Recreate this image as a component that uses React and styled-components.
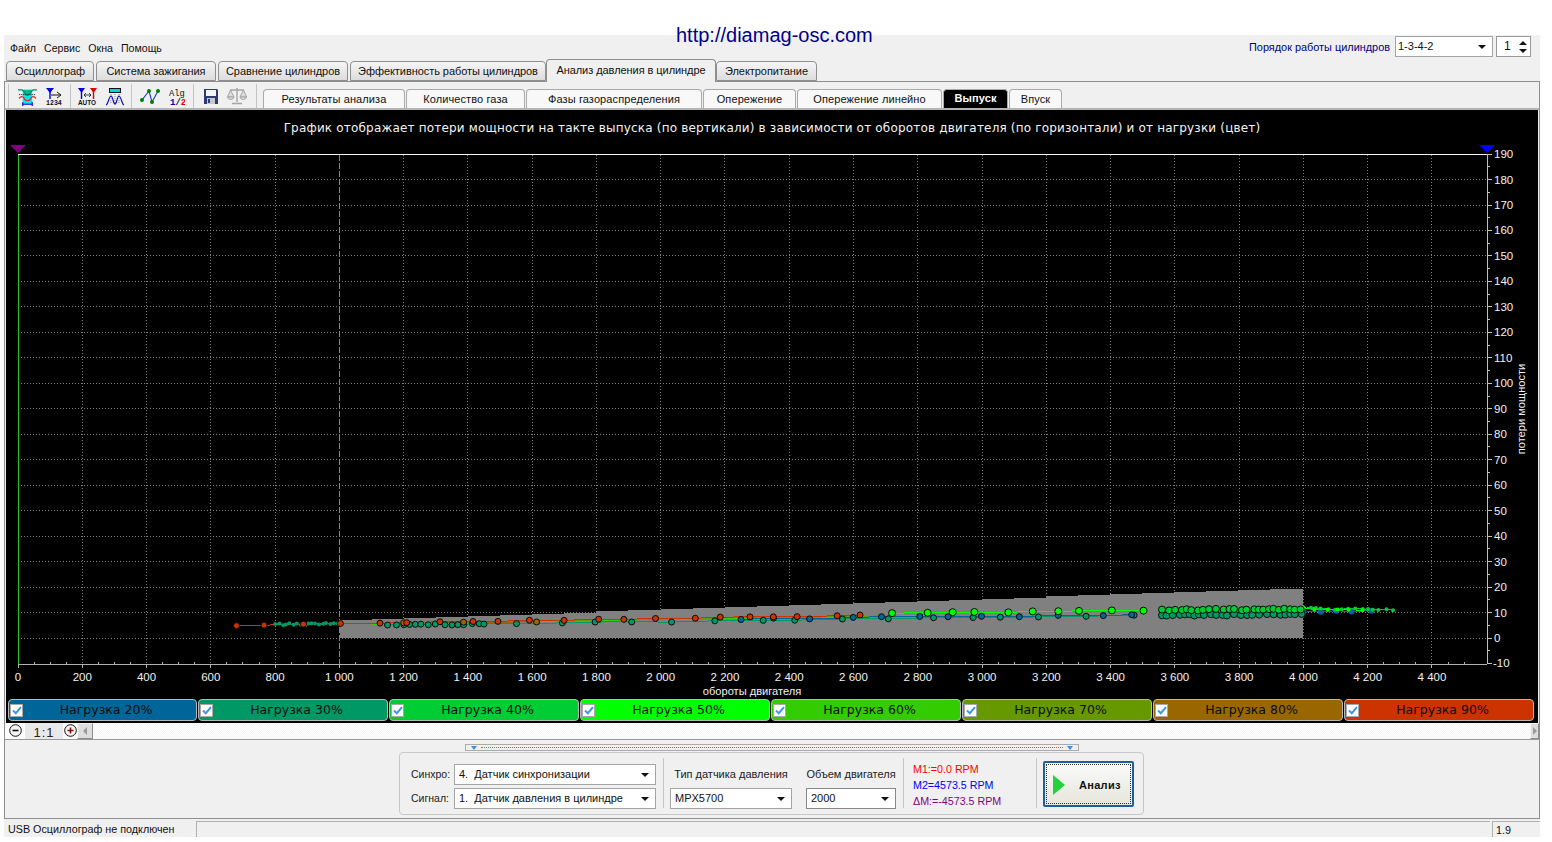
import React from 'react';
import styled, { createGlobalStyle } from 'styled-components';

const GlobalStyle = createGlobalStyle`
  html, body { margin: 0; padding: 0; background: #fff; }
  body { font-family: "Liberation Sans", Arial, sans-serif; font-size: 11px; color: #111; }
  * { box-sizing: border-box; }
`;

const Screen = styled.div`
  position: relative;
  width: 1552px;
  height: 842px;
  padding: 35px 12px 5px 4px;
  overflow: hidden;
`;

const SiteUrl = styled.div`
  position: absolute;
  left: 676px;
  top: 23px;
  font-size: 20px;
  line-height: 24px;
  color: #00008b;
`;

const Window = styled.div`
  height: 802px;
  background: #f0f0f0;
  display: flex;
  flex-direction: column;
`;

const TopRow = styled.div`
  height: 25px;
  display: flex;
  align-items: flex-start;
  justify-content: space-between;
  padding: 0 9px 0 6px;
`;

const Menu = styled.div`
  display: flex;
  gap: 8px;
  padding-top: 7px;
  line-height: 13px;
  font-size: 10.6px;
`;

const CylinderOrder = styled.div`
  display: flex;
  align-items: flex-start;
  padding-top: 1px;
`;

const OrderLabel = styled.span`
  color: #000080;
  font-size: 10.9px;
  line-height: 21px;
  margin-right: 5px;
  padding-top: 1px;
`;

const Spinner = styled.div`
  width: 35px;
  height: 21px;
  margin-left: 3px;
  border: 1px solid #999;
  background: #fff;
  padding-left: 7px;
  line-height: 19px;
  font-size: 12px;
  display: flex;
  justify-content: space-between;
`;

const SpinArrows = styled.div`
  width: 14px;
  display: flex;
  flex-direction: column;
  align-items: center;
  justify-content: center;
  gap: 4px;
`;

const SpinArrow = styled.i`
  width: 0;
  height: 0;
  border-left: 4px solid transparent;
  border-right: 4px solid transparent;
  ${p => (p.$up ? 'border-bottom: 4px solid #111;' : 'border-top: 4px solid #111;')}
`;

const MainTabs = styled.div`
  height: 21px;
  display: flex;
  gap: 2px;
  align-items: flex-end;
  padding-left: 2px;
`;

const MainTab = styled.div`
  width: ${p => p.$w}px;
  height: ${p => (p.$active ? 23 : 20)}px;
  margin: ${p => (p.$active ? '0 -2px -1px -2px' : '0')};
  position: relative;
  z-index: ${p => (p.$active ? 2 : 1)};
  border: 1px solid #8e8e8e;
  border-bottom: ${p => (p.$active ? 'none' : '1px solid #8e8e8e')};
  border-radius: 4px 4px 0 0;
  background: ${p => (p.$active ? '#f0f0f0' : 'linear-gradient(#f6f6f6, #dcdcdc)')};
  text-align: center;
  font-size: 11px;
  letter-spacing: -0.06px;
  line-height: ${p => (p.$active ? 20 : 19)}px;
  white-space: nowrap;
`;

const Page = styled.div`
  height: 738px;
  border: 1px solid #8e8e8e;
  border-bottom: 1px solid #8e8e8e;
  display: flex;
  flex-direction: column;
`;

const Toolbar = styled.div`
  height: 28px;
  flex: none;
  display: flex;
  align-items: flex-end;
  padding-left: 3px;
  border-bottom: 2px solid #b4b4b4;
  background: #f0f0f0;
`;

const ToolGroup = styled.div`
  width: ${p => p.$w}px;
  height: 24px;
  align-self: flex-start;
  margin-top: 2px;
  display: flex;
  align-items: center;
  justify-content: center;
  gap: 9px;
  border-left: ${p => (p.$first ? '1px solid #c4c4c4' : 'none')};
  border-right: 1px solid #c4c4c4;
`;

const SubTabs = styled.div`
  display: flex;
  gap: 1px;
  margin-left: 6px;
`;

const SubTab = styled.div`
  width: ${p => p.$w}px;
  height: 19px;
  border: 1px solid #aaa;
  border-bottom: none;
  border-radius: 4px 4px 0 0;
  background: ${p => (p.$active ? '#000' : '#f8f8f8')};
  color: ${p => (p.$active ? '#fff' : '#111')};
  font-weight: ${p => (p.$active ? 700 : 400)};
  text-align: center;
  font-size: 11px;
  letter-spacing: 0.1px;
  line-height: ${p => (p.$active ? 16 : 19)}px;
`;

const ChartBox = styled.div`
  flex: none;
  margin: 0 1px;
  height: 613px;
  background: #000;
  display: flex;
  flex-direction: column;
`;

const ChartTitle = styled.div`
  height: 35px;
  padding-top: 10px;
  text-align: center;
  color: #f4f4f4;
  font-family: "DejaVu Sans", Verdana, sans-serif;
  font-size: 12px;
  line-height: 17px;
  letter-spacing: 0.18px;
`;

const Plot = styled.svg`
  display: block;
  flex: none;
`;

const AxisText = styled.text`
  font-family: "Liberation Sans", Arial, sans-serif;
  font-size: 11.5px;
  fill: #f2f2f2;
`;

const AxisName = styled.text`
  font-family: "Liberation Sans", Arial, sans-serif;
  font-size: 11.1px;
  fill: #f2f2f2;
`;

const Legend = styled.div`
  display: grid;
  grid-template-columns: 189px repeat(7, 190px);
  gap: 1px;
  height: 24px;
  padding: 0 0 2px 2px;
`;

const LegendItem = styled.div`
  position: relative;
  height: 22px;
  border: 1px solid #b8b8b8;
  border-radius: 4px;
  background: ${p => p.$color};
  text-align: center;
  font-family: "DejaVu Sans", Verdana, sans-serif;
  font-size: 12.5px;
  line-height: 20px;
  color: #0c0c0c;
  padding-left: 7px;
`;

const LegendCheck = styled.span`
  position: absolute;
  left: 1px;
  top: 4px;
  width: 13px;
  height: 13px;
  background: #fff;
  border: 1px solid #a8a8a8;
  display: flex;
  align-items: center;
  justify-content: center;
`;

const ZoomRow = styled.div`
  flex: none;
  height: 17px;
  display: flex;
  align-items: stretch;
  background: #fbfbfb;
  border-bottom: 1px solid #999;
  padding-left: 3px;
`;

const RoundBtn = styled.div`
  width: 13px;
  height: 13px;
  margin: 1px 0 0 1px;
  display: flex;
`;

const ZoomValue = styled.div`
  width: 39px;
  margin-left: 2px;
  background: #e9e9e9;
  text-align: center;
  font-size: 13px;
  letter-spacing: 1px;
  line-height: 20px;
  color: #222;
  border-left: 1px solid #fff;
  height: 16px;
  overflow: hidden;
`;

const ScrollBtn = styled.div`
  width: ${p => p.$w}px;
  background: #dedede;
  border: 1px solid #f4f4f4;
  border-right-color: #8c8c8c;
  border-bottom-color: #8c8c8c;
  display: flex;
  align-items: center;
  justify-content: center;
`;

const ScrollTrack = styled.div`
  flex: 1;
  background: repeating-conic-gradient(#f4f4f4 0 25%, #fff 0 50%) 0 0 / 2px 2px;
`;

const ScrollArrow = styled.i`
  width: 0;
  height: 0;
  border-top: 4px solid transparent;
  border-bottom: 4px solid transparent;
  ${p => (p.$right ? 'border-left: 4px solid #9a9a9a;' : 'border-right: 4px solid #9a9a9a;')}
`;

const Panel = styled.div`
  flex: 1;
  display: flex;
  flex-direction: column;
  align-items: center;
  padding-top: 4px;
`;

const Splitter = styled.div`
  width: 614px;
  height: 7px;
  border: 1px solid #aaa;
  display: flex;
  align-items: center;
  gap: 4px;
  padding: 0 5px;
`;

const SplitDots = styled.div`
  flex: 1;
  border-top: 1px dotted #3c8fe0;
`;

const SplitTriangle = styled.i`
  width: 0;
  height: 0;
  border-left: 3px solid transparent;
  border-right: 3px solid transparent;
  border-top: 4px solid #3c8fe0;
`;

const ControlGroup = styled.div`
  width: 745px;
  height: 63px;
  margin: 1px 1px 0 0;
  border: 1px solid #c8c8c8;
  border-radius: 4px;
  display: flex;
`;

const GroupDivider = styled.div`
  width: 1px;
  background: #c8c8c8;
  margin: 5px 0 6px;
`;

const SourceFields = styled.div`
  width: 263px;
  padding: 11px 0 0 11px;
  display: grid;
  grid-template-columns: 43px 202px;
  grid-auto-rows: 21px;
  row-gap: 3px;
`;

const SensorFields = styled.div`
  width: 239px;
  padding: 11px 0 0 6px;
  display: grid;
  grid-template-columns: 122px 90px;
  grid-auto-rows: 21px;
  column-gap: 14px;
  row-gap: 3px;
`;

const FieldLabel = styled.div`
  font-size: ${p => (p.$center ? 11 : 10.5)}px;
  line-height: 21px;
  white-space: nowrap;
  color: #222;
  text-align: ${p => (p.$center ? 'center' : 'left')};
`;

const Combo = styled.div`
  height: 21px;
  width: ${p => (p.$w ? `${p.$w}px` : 'auto')};
  border: 1px solid ${p => (p.$dark ? '#888' : '#a4a4a4')};
  background: #fff;
  display: flex;
  align-items: center;
  justify-content: space-between;
  padding: 0 6px 0 ${p => (p.$w ? 2 : 4)}px;
  font-size: 11px;
  line-height: 19px;
  color: #111;
  white-space: pre;
`;

const ComboArrow = styled.i`
  width: 0;
  height: 0;
  flex: none;
  border-left: 4px solid transparent;
  border-right: 4px solid transparent;
  border-top: 4px solid #111;
`;

const Markers = styled.div`
  width: 132px;
  padding: 8px 0 0 9px;
`;

const MarkerLine = styled.div`
  color: ${p => p.$color};
  font-size: 10.7px;
  line-height: 16px;
  white-space: nowrap;
`;

const AnalyzeBtn = styled.div`
  width: 91px;
  height: 46px;
  margin: 8px 0 0 6px;
  border: 2px solid #1e5f9e;
  border-radius: 2px;
  outline: 1px dotted #333;
  outline-offset: -4px;
  background: linear-gradient(#fafafa, #e6e6dc);
  display: flex;
  align-items: center;
  padding: 1px 0 0 8px;
  gap: 14px;
  font-weight: 700;
  font-size: 11px;
  letter-spacing: 0.3px;
`;

const PlayMark = styled.i`
  width: 0;
  height: 0;
  border-top: 10px solid transparent;
  border-bottom: 10px solid transparent;
  border-left: 12px solid #1fd43a;
`;

const StatusBar = styled.div`
  height: 18px;
  padding-top: 2px;
  display: flex;
  font-size: 10.75px;
  line-height: 17px;
`;

const StatusCell = styled.div`
  width: ${p => (p.$w ? `${p.$w}px` : 'auto')};
  flex: ${p => (p.$w ? 'none' : 1)};
  margin-left: ${p => p.$gap || 0}px;
  padding-left: ${p => p.$pad || 0}px;
  border-top: ${p => (p.$plain ? 'none' : '1px solid #b0b0b0')};
  border-left: ${p => (p.$plain ? 'none' : '1px solid #b0b0b0')};
`;

/* chart scale: x in rpm, y in power-loss units, page coordinates */
const toX = rpm => 18 + rpm * 0.32135;
const toY = v => 638 - v * 2.547;
const crisp = n => Math.floor(n) + 0.5;

const random = (seed => () => {
  seed = (seed * 16807) % 2147483647;
  return seed / 2147483647;
})(4711);

function makeSeries(from, to, step, level, slope, spread) {
  const pts = [];
  for (let rpm = from; rpm <= to; rpm += step * (0.7 + random() * 0.6)) {
    pts.push([rpm, level + slope * (rpm - from) / 1000 + (random() - 0.5) * spread]);
  }
  return pts;
}

const SERIES = [
  { color: '#33cc00', lineOnly: true, points: makeSeries(1100, 2900, 150, 5.4, 1.9, 0.5) },
  { color: '#669900', lineOnly: true, points: makeSeries(1000, 2700, 160, 5.6, 1.8, 0.4) },
  { color: '#009966', r: 2, plain: true, points: makeSeries(800, 1000, 11, 5.3, 1, 0.9) },
  { color: '#009966', r: 3, points: makeSeries(1150, 1450, 24, 5.2, 1, 0.6) },
  { color: '#009966', r: 3, points: makeSeries(1450, 3500, 118, 5.4, 1.8, 0.5) },
  { color: '#006699', r: 3, points: makeSeries(2250, 3620, 120, 7.5, 1.3, 0.6) },
  { color: '#006699', r: 3, plain: true, points: makeSeries(4000, 4270, 62, 10.4, 1.5, 0.5) },
  { color: '#00cc33', r: 2, plain: true, points: makeSeries(4000, 4280, 20, 11.6, -2, 0.7) },
  { color: '#00ff00', r: 2, plain: true, points: makeSeries(4000, 4200, 34, 11.6, -2, 0.8) },
  { color: '#996600', r: 3, points: makeSeries(1200, 1700, 240, 5.9, 1, 0.3) },
  { color: '#cc3300', r: 3, points: makeSeries(680, 2650, 100, 5.0, 2.0, 0.4) },
  { color: '#00ff00', r: 3.5, points: makeSeries(2720, 3560, 90, 9.7, 1.4, 0.5) },
  { color: '#009966', r: 3.5, points: makeSeries(3560, 4000, 19, 9.0, 0.5, 0.6) },
  { color: '#00cc33', r: 3.5, points: makeSeries(3560, 4000, 19, 11.0, 0.8, 0.6) }
];

const lossPolygon = () => {
  let d = `M339.5 638`;
  for (let x = 339.5, i = 0; x < 1303; x += 32.1, i++) {
    const top = Math.round(620 - i * 1.07);
    d += ` V${top} H${Math.min(x + 32.1, 1303)}`;
  }
  return `${d} V638 Z`;
};

const xTicks = Array.from({ length: 23 }, (_, i) => i * 200);
const xMinor = Array.from({ length: 91 }, (_, i) => i * 50);
const yTicks = Array.from({ length: 21 }, (_, i) => 190 - i * 10);

const fmtRpm = n => (n >= 1000 ? `${Math.floor(n / 1000)} ${String(n % 1000).padStart(3, '0')}` : String(n));

function Chart() {
  return (
    <Plot width="1532" height="554" viewBox="6 145 1532 554">
      <path d={lossPolygon()} fill="#808080" shapeRendering="crispEdges" />

      {xTicks.filter(t => t > 0 && t <= 4400 && t !== 1000).map(t => (
        <line key={t} x1={crisp(toX(t))} x2={crisp(toX(t))} y1="155" y2="664" stroke="#808080" strokeDasharray="1 2" />
      ))}
      {yTicks.slice(1, 20).map(t => (
        <line key={t} x1="18" x2="1487" y1={crisp(toY(t))} y2={crisp(toY(t))} stroke="#808080" strokeDasharray="1 2" />
      ))}
      <line x1="339.5" x2="339.5" y1="155" y2="664" stroke="#888" strokeDasharray="6 2" />

      <line x1="18" x2="1487" y1="154.5" y2="154.5" stroke="#f4f4f4" />
      <line x1="18" x2="1487" y1="664.5" y2="664.5" stroke="#b0b0b0" />
      <line x1="18.5" x2="18.5" y1="155" y2="664" stroke="#22c322" />
      <line x1="1487.5" x2="1487.5" y1="154" y2="664" stroke="#c8c88a" />

      {xMinor.filter(t => toX(t) <= 1487).map(t => (
        t % 200 === 0
          ? <line key={t} x1={crisp(toX(t))} x2={crisp(toX(t))} y1="664" y2="668" stroke="#b0b0b0" />
          : <line key={t} x1={crisp(toX(t))} x2={crisp(toX(t))} y1="662" y2="664" stroke="#b0b0b0" />
      ))}
      {yTicks.map(t => (
        <g key={t}>
          <line x1="1487" x2="1492" y1={crisp(toY(t))} y2={crisp(toY(t))} stroke="#c8c88a" />
          {t > -10 && <line x1="1487" x2="1490" y1={crisp(toY(t - 5))} y2={crisp(toY(t - 5))} stroke="#c8c88a" />}
        </g>
      ))}

      {SERIES.map((s, i) => (
        <polyline
          key={i}
          fill="none"
          stroke={s.color}
          points={s.points.map(([x, y]) => `${toX(x)},${toY(y)}`).join(' ')}
          shapeRendering="crispEdges"
        />
      ))}
      {SERIES.filter(s => !s.lineOnly).map((s, i) => (
        <g key={i} fill={s.color} stroke={s.plain ? 'none' : '#0a0a0a'}>
          {s.points.map(([x, y], j) => (
            <circle key={j} cx={toX(x)} cy={toY(y)} r={s.r} />
          ))}
        </g>
      ))}

      <polygon points="10,145 26,145 18,153" fill="#800080" />
      <polygon points="1479,145 1495,145 1487,153" fill="#0000ff" />

      {xTicks.map(t => (
        <AxisText key={t} x={toX(t)} y="681" textAnchor="middle">{fmtRpm(t)}</AxisText>
      ))}
      {yTicks.map(t => (
        <AxisText key={t} x={t < 0 ? 1493 : 1494} y={toY(t) + 4}>{t}</AxisText>
      ))}
      <AxisName x="752" y="695" textAnchor="middle">обороты двигателя</AxisName>
      <AxisName transform="translate(1525 409) rotate(-90)" textAnchor="middle">потери мощности</AxisName>
    </Plot>
  );
}

const IconWaves = () => (
  <svg width="19" height="19" viewBox="0 0 20 20">
    <path d="M5 3H15V17H5Z" fill="#00e8e8" />
    <path d="M0 3H4C6 3 7 9 10 9C13 9 14 3 16 3H20" fill="#00b890" stroke="#008a5a" strokeWidth="1.2" />
    <path d="M1 8H19" stroke="#111" strokeDasharray="1 1" />
    <path d="M1 12C4 9 6 10 7 13C8 15 12 15 13 13C14 10 16 9 19 12" fill="none" stroke="#e02020" strokeWidth="1.2" />
    <path d="M5 16V20M15 16V20M5 18H15" stroke="#0000d0" strokeWidth="1.2" />
  </svg>
);

const IconTicks = () => (
  <svg width="16" height="19" viewBox="0 0 16 19">
    <polygon points="0,1 8,1 4,6" fill="#0000e0" />
    <path d="M4 3V12" stroke="#0000e0" strokeWidth="1.4" />
    <path d="M5 8H14M11 5L15 8L11 11" fill="none" stroke="#111" />
    <text x="0" y="18" fontFamily="Liberation Mono, monospace" fontSize="6.6" fontWeight="700" fill="#111">1234</text>
  </svg>
);

const IconAuto = () => (
  <svg width="19" height="19" viewBox="0 0 19 19">
    <polygon points="0,1 7,1 3.5,6" fill="#0000e0" />
    <polygon points="12,1 19,1 15.5,6" fill="#e00000" />
    <path d="M3.5 3V12" stroke="#0000e0" strokeWidth="1.4" />
    <path d="M15.5 3V12" stroke="#e00000" strokeWidth="1.4" />
    <path d="M6 8H13M6 8L8 6M6 8L8 10M13 8L11 6M13 8L11 10" fill="none" stroke="#111" strokeWidth=".8" />
    <text x="0" y="18" fontFamily="Liberation Sans, sans-serif" fontSize="6.4" fontWeight="700" fill="#111">AUTO</text>
  </svg>
);

const IconPeaks = () => (
  <svg width="18" height="19" viewBox="0 0 18 19">
    <rect x="3.5" y="1.5" width="11" height="4" fill="#00d8d8" stroke="#111" />
    <path d="M5 7V17M9 7V17M13 7V17" stroke="#888" strokeDasharray="1 1" />
    <path d="M0 18C2 18 3 9 5 9C7 9 7 17 9 17C11 17 11 9 13 9C15 9 16 18 18 18" fill="none" stroke="#0000c0" strokeWidth="1.1" />
  </svg>
);

const IconNodes = () => (
  <svg width="20" height="16" viewBox="0 0 20 16">
    <path d="M2 12L9 3L12 14L18 3" fill="none" stroke="#1a3fc0" strokeWidth="1.1" />
    <circle cx="2" cy="12" r="2" fill="#008000" />
    <circle cx="9" cy="3" r="2" fill="#008000" />
    <circle cx="12" cy="14" r="2" fill="#008000" />
    <circle cx="18" cy="3" r="2" fill="#008000" />
  </svg>
);

const IconAlg = () => (
  <svg width="16" height="22" viewBox="0 0 16 22">
    <text x="0" y="11" fontFamily="Liberation Mono, monospace" fontSize="8.8" fill="#111">Alg</text>
    <text x="1" y="20" fontFamily="Liberation Mono, monospace" fontSize="9" fontWeight="700">
      <tspan fill="#0000c0">1</tspan><tspan fill="#111">/</tspan><tspan fill="#e00000">2</tspan>
    </text>
  </svg>
);

const IconSave = () => (
  <svg width="14" height="15" viewBox="0 0 14 15">
    <path d="M0 0H13L14 1V15H0Z" fill="#2c3a78" />
    <rect x="2" y="1" width="10" height="6" fill="#f4f4f4" />
    <rect x="3" y="9" width="8" height="6" fill="#c9c9c9" />
    <rect x="4" y="10" width="2" height="4" fill="#2c3a78" />
  </svg>
);

const IconScales = () => (
  <svg width="20" height="18" viewBox="0 0 20 18" fill="#dcdcdc" stroke="#a4a4a4">
    <path d="M10 1V15M3 3H17M5 16.5H15" fill="none" strokeWidth="1.4" />
    <path d="M3.5 3L0.5 10H7Z" />
    <path d="M16.5 3L13 10H19.5Z" />
    <path d="M0.5 10A3.3 3 0 0 0 7 10Z" />
    <path d="M13 10A3.3 3 0 0 0 19.5 10Z" />
  </svg>
);

const CheckMark = () => (
  <svg width="10" height="9" viewBox="0 0 10 9">
    <path d="M1 4.5L3.8 7.2L9 1.2" fill="none" stroke="#3d96e8" strokeWidth="2" />
  </svg>
);

const ZoomIcon = ({ plus }) => (
  <svg width="13" height="13" viewBox="0 0 13 13">
    <circle cx="6.5" cy="6.5" r="5.8" fill="#f4f4f4" stroke="#111" />
    <path d={plus ? 'M3.5 6.5H9.5M6.5 3.5V9.5' : 'M3.5 6.5H9.5'} stroke={plus ? '#8a0f0f' : '#111'} strokeWidth="1.6" />
  </svg>
);

const MAIN_TABS = [
  ['Осциллограф', 88],
  ['Система зажигания', 120],
  ['Сравнение цилиндров', 130],
  ['Эффективность работы цилиндров', 196],
  ['Анализ давления в цилиндре', 170, true],
  ['Электропитание', 101]
];

const SUB_TABS = [
  ['Результаты анализа', 142],
  ['Количество газа', 119],
  ['Фазы газораспределения', 176],
  ['Опережение', 93],
  ['Опережение линейно', 145],
  ['Выпуск', 65, true],
  ['Впуск', 53]
];

const LOADS = [
  ['Нагрузка 20%', '#006699'],
  ['Нагрузка 30%', '#009966'],
  ['Нагрузка 40%', '#00cc33'],
  ['Нагрузка 50%', '#00ff00'],
  ['Нагрузка 60%', '#33cc00'],
  ['Нагрузка 70%', '#669900'],
  ['Нагрузка 80%', '#996600'],
  ['Нагрузка 90%', '#cc3300']
];

function App() {
  return (
    <Screen>
      <GlobalStyle />
      <SiteUrl>http://diamag-osc.com</SiteUrl>
      <Window>
        <TopRow>
          <Menu>
            <span>Файл</span>
            <span>Сервис</span>
            <span>Окна</span>
            <span>Помощь</span>
          </Menu>
          <CylinderOrder>
            <OrderLabel>Порядок работы цилиндров</OrderLabel>
            <Combo $w={98}>1-3-4-2<ComboArrow /></Combo>
            <Spinner>
              1
              <SpinArrows>
                <SpinArrow $up />
                <SpinArrow />
              </SpinArrows>
            </Spinner>
          </CylinderOrder>
        </TopRow>

        <MainTabs>
          {MAIN_TABS.map(([label, w, active]) => (
            <MainTab key={label} $w={w} $active={active}>{label}</MainTab>
          ))}
        </MainTabs>

        <Page>
          <Toolbar>
            <ToolGroup $w={63} $first><IconWaves /><IconTicks /></ToolGroup>
            <ToolGroup $w={61}><IconAuto /><IconPeaks /></ToolGroup>
            <ToolGroup $w={62}><IconNodes /><IconAlg /></ToolGroup>
            <ToolGroup $w={63}><IconSave /><IconScales /></ToolGroup>
            <SubTabs>
              {SUB_TABS.map(([label, w, active]) => (
                <SubTab key={label} $w={w} $active={active}>{label}</SubTab>
              ))}
            </SubTabs>
          </Toolbar>

          <ChartBox>
            <ChartTitle>График отображает потери мощности на такте выпуска (по вертикали) в зависимости от оборотов двигателя (по горизонтали) и от нагрузки (цвет)</ChartTitle>
            <Chart />
            <Legend>
              {LOADS.map(([label, color]) => (
                <LegendItem key={label} $color={color}>
                  <LegendCheck><CheckMark /></LegendCheck>
                  {label}
                </LegendItem>
              ))}
            </Legend>
          </ChartBox>

          <ZoomRow>
            <RoundBtn><ZoomIcon /></RoundBtn>
            <ZoomValue>1:1</ZoomValue>
            <RoundBtn><ZoomIcon plus /></RoundBtn>
            <ScrollBtn $w={16}><ScrollArrow /></ScrollBtn>
            <ScrollTrack />
            <ScrollBtn $w={9}><ScrollArrow $right /></ScrollBtn>
          </ZoomRow>

          <Panel>
            <Splitter>
              <SplitTriangle />
              <SplitDots />
              <SplitTriangle />
            </Splitter>
            <ControlGroup>
              <SourceFields>
                <FieldLabel>Синхро:</FieldLabel>
                <Combo>{'4.  Датчик синхронизации'}<ComboArrow /></Combo>
                <FieldLabel>Сигнал:</FieldLabel>
                <Combo>{'1.  Датчик давления в цилиндре'}<ComboArrow /></Combo>
              </SourceFields>
              <GroupDivider />
              <SensorFields>
                <FieldLabel $center>Тип датчика давления</FieldLabel>
                <FieldLabel $center>Объем двигателя</FieldLabel>
                <Combo>MPX5700<ComboArrow /></Combo>
                <Combo $dark>2000<ComboArrow /></Combo>
              </SensorFields>
              <GroupDivider />
              <Markers>
                <MarkerLine $color="#ff0000">M1:=0.0 RPM</MarkerLine>
                <MarkerLine $color="#0000ff">M2=4573.5 RPM</MarkerLine>
                <MarkerLine $color="#800080">ΔM:=-4573.5 RPM</MarkerLine>
              </Markers>
              <GroupDivider />
              <AnalyzeBtn><PlayMark />Анализ</AnalyzeBtn>
            </ControlGroup>
          </Panel>
        </Page>

        <StatusBar>
          <StatusCell $w={192} $pad={4} $plain>USB Осциллограф не подключен</StatusCell>
          <StatusCell />
          <StatusCell $w={48} $gap={2} $pad={3}>1.9</StatusCell>
        </StatusBar>
      </Window>
    </Screen>
  );
}

export default App;
